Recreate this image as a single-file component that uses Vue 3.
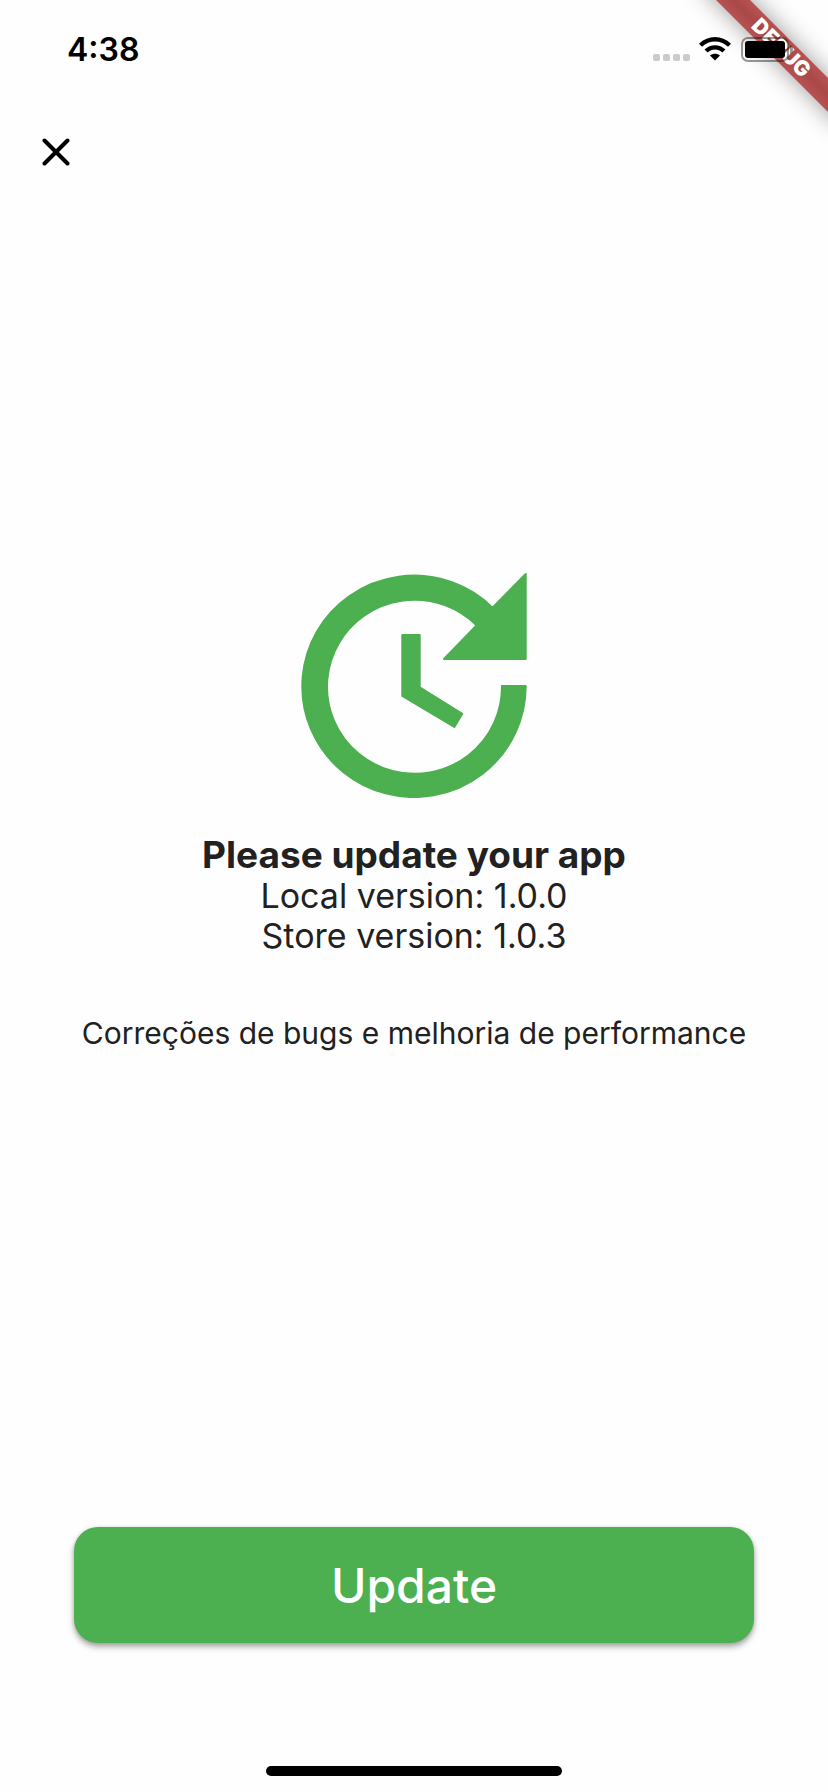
<script setup>
const localVersion = '1.0.0'
const storeVersion = '1.0.3'
const notes = 'Correções de bugs e melhoria de performance'
</script>

<template>
  <div class="screen">
    <div class="banner" aria-hidden="true">
      <div class="banner-band">DEBUG</div>
    </div>

    <header class="status-bar">
      <time class="clock">4:38</time>
      <div class="indicators">
        <span class="signal"><i v-for="n in 4" :key="n"></i></span>
        <svg class="wifi" viewBox="0 0 32 24" role="img" aria-label="Wi-Fi">
          <path d="M0 6.7C9-2.2 23-2.2 32 6.7L29 9.8C21.7 2.8 10.3 2.8 3 9.8Z" />
          <path d="M5.5 12.4C11.5 6.7 20.5 6.7 26.5 12.4L23.4 15.5C19.2 11.6 12.8 11.6 8.6 15.5Z" />
          <path d="M11 18.5C13.9 16 18.1 16 21 18.5L16 23.5Z" />
        </svg>
        <svg class="battery" viewBox="0 0 54 26" role="img" aria-label="Battery full">
          <rect x="2" y="2" width="46" height="23" rx="6" class="battery-case" />
          <rect x="5" y="5" width="40" height="17" rx="3" />
          <path d="M50 9C54 10 54 17 50 18Z" class="battery-cap" />
        </svg>
      </div>
    </header>

    <nav class="toolbar">
      <button class="close" type="button" aria-label="Close">
        <svg viewBox="0 0 28 28"><path d="M2.5 2.5L25.5 25.5M25.5 2.5L2.5 25.5" /></svg>
      </button>
    </nav>

    <main class="content">
      <svg class="update-icon" viewBox="10 12 228 226" aria-hidden="true">
        <path d="M235.7 14V99H154L186.5 65.4A87.5 87 0 1 0 212 126H235.7A111.7 110.7 0 1 1 202.5 47.6Z" />
        <path d="M112.3 75H129.7V127.4L172.3 153.8L164.3 167L112.3 136Z" />
      </svg>
      <h1>Please update your app</h1>
      <p class="version">Local version: {{ localVersion }}</p>
      <p class="version">Store version: {{ storeVersion }}</p>
      <p class="notes">{{ notes }}</p>
    </main>

    <footer class="actions">
      <button class="update" type="button">Update</button>
      <div class="home-indicator"></div>
    </footer>
  </div>
</template>

<style>
body {
  background: #fefefe;
}
</style>

<style scoped>
.screen {
  position: relative;
  display: flex;
  flex-direction: column;
  min-height: 100vh;
  background: #fefefe;
  color: #212121;
  font-family: Inter, "Liberation Sans", sans-serif;
}
.banner {
  position: absolute;
  top: 0;
  right: 0;
  width: 160px;
  height: 160px;
  overflow: hidden;
  pointer-events: none;
}
.banner-band {
  position: absolute;
  top: 36px;
  left: 13px;
  width: 200px;
  height: 24px;
  line-height: 24px;
  text-align: center;
  font-size: 21px;
  font-weight: 900;
  color: #fff;
  background: linear-gradient(#b95252, #a84848 50%, #b95252);
  box-shadow: 0 0 24px rgba(0, 0, 0, 0.4);
  transform: rotate(45deg);
}
.status-bar {
  position: relative;
  display: flex;
  align-items: center;
  justify-content: space-between;
  height: 98px;
  padding: 0 34px 0 67px;
  color: #000;
}
.clock {
  font-size: 32px;
  font-weight: 600;
}
.indicators {
  display: flex;
  align-items: center;
}
.signal {
  display: flex;
  gap: 3px;
  margin: 16px 9px 0 0;
}
.signal i {
  width: 7px;
  height: 7px;
  border-radius: 2px;
  background: #cbcbcb;
}
.wifi {
  width: 32px;
  height: 24px;
  margin-right: 9px;
}
.battery {
  width: 54px;
  height: 26px;
}
.battery-case {
  fill: none;
  stroke: #000;
  stroke-opacity: 0.4;
  stroke-width: 2;
}
.battery-cap {
  fill-opacity: 0.4;
}
.toolbar {
  display: flex;
  padding: 26px 28px 24px;
}
.close {
  display: grid;
  place-items: center;
  width: 56px;
  height: 56px;
  padding: 0;
  border: 0;
  background: none;
}
.close svg {
  width: 28px;
  height: 28px;
  fill: none;
  stroke: #000;
  stroke-width: 4;
  stroke-linecap: round;
}
.content {
  display: flex;
  flex: 1;
  flex-direction: column;
  align-items: center;
  justify-content: center;
  padding-bottom: 106px;
  text-align: center;
}
.update-icon {
  width: 228px;
  height: 226px;
  margin-bottom: 36px;
  fill: #4caf50;
  stroke: #4caf50;
  stroke-width: 2;
  stroke-linejoin: round;
}
h1,
p {
  margin: 0;
}
h1 {
  font-size: 37px;
  font-weight: 700;
  line-height: 42px;
}
.version {
  font-size: 34px;
  line-height: 40px;
}
.notes {
  margin-top: 57px;
  font-size: 30px;
  line-height: 40px;
}
.actions {
  display: flex;
  flex-direction: column;
  align-items: center;
  padding: 0 74px 16px;
}
.update {
  width: 100%;
  height: 116px;
  padding: 0;
  border: 0;
  border-radius: 24px;
  background: #4caf50;
  box-shadow: 0 4px 6px rgba(0, 0, 0, 0.3), 0 1px 4px rgba(0, 0, 0, 0.16);
  color: #fff;
  font: inherit;
  font-size: 48px;
  font-weight: 500;
}
.home-indicator {
  width: 296px;
  height: 10px;
  margin-top: 123px;
  border-radius: 5px;
  background: #000;
}
</style>
